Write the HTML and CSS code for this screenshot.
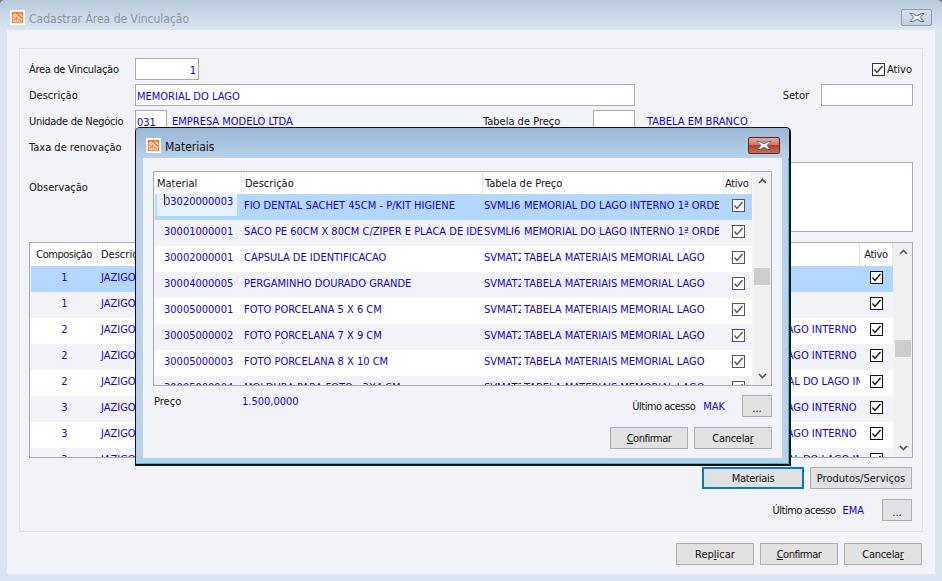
FILE: index.html
```html
<!DOCTYPE html>
<html lang="pt-BR">
<head>
<meta charset="utf-8">
<title>Cadastrar Área de Vinculação</title>
<link rel="stylesheet" href="styles.css">
</head>
<body>
<svg class="defs" width="0" height="0" aria-hidden="true">
  <symbol id="logo" viewBox="0 0 16 16">
    <rect width="16" height="16" fill="#fff"/>
    <rect x="2" y="2" width="12" height="12" fill="#f47a2c"/>
    <path d="M3 7l3-3M3 10l5-5M10 4l3 3M8 7l5 4M4 13v-2M6 13v-3M8 13V9M10 13v-2M12 13v-1" stroke="#fff" stroke-width="1.2" fill="none"/>
  </symbol>
  <symbol id="x" viewBox="0 0 18 11">
    <path d="M4.5 1.5L9 4l4.500-2.500h2.500L12 5.500l4 4h-3L9 7.200 5 9.500H2l4-4-4-4z" fill="#fff" stroke="#5b6570" stroke-width="1"/>
  </symbol>
  <symbol id="chk" viewBox="0 0 13 13">
    <rect x=".5" y=".5" width="12" height="12" fill="#fff" stroke="currentColor"/>
    <path d="M2.500 6.500L5 9.500 10.500 3" fill="none" stroke="currentColor" stroke-width="1.400"/>
  </symbol>
  <symbol id="up" viewBox="0 0 9 6"><path d="M1 5l3.500-3.500L8 5" fill="none" stroke="#555" stroke-width="1.600"/></symbol>
  <symbol id="down" viewBox="0 0 9 6"><path d="M1 1l3.500 3.500L8 1" fill="none" stroke="#555" stroke-width="1.600"/></symbol>
</svg>

<div class="win">
  <div class="titlebar">
    <svg class="logo"><use href="#logo"/></svg>
    <span class="title-text">Cadastrar Área de Vinculação</span>
    <span class="close"><svg class="close-x"><use href="#x"/></svg></span>
  </div>
  <div class="client">
    <div class="group">
      <div class="row">
        <span class="lbl tight">Área de Vinculação</span>
        <span class="input w64 num val">1</span>
        <span class="grow"></span>
        <svg class="chk chk-top"><use href="#chk"/></svg>
        <span class="ativo-lbl">Ativo</span>
      </div>
      <div class="row">
        <span class="lbl">Descrição</span>
        <span class="input w500 val">MEMORIAL DO LAGO</span>
        <span class="grow"></span>
        <span class="lbl-setor">Setor</span>
        <span class="input w92"></span>
      </div>
      <div class="row">
        <span class="lbl tight">Unidade de Negócio</span>
        <span class="input w32 val">031</span>
        <span class="val name-un">EMPRESA MODELO LTDA</span>
        <span class="lbl-tab">Tabela de Preço</span>
        <span class="input w42"></span>
        <span class="val name-tab">TABELA EM BRANCO</span>
      </div>
      <div class="row">
        <span class="lbl">Taxa de renovação</span>
      </div>
      <div class="row row-obs">
        <span class="lbl lbl-obs">Observação</span>
        <span class="input textarea"></span>
      </div>

      <div class="list main-list">
        <div class="list-body">
          <div class="head main-head">
            <span class="h m-comp center tighter">Composição</span>
            <span class="h m-desc">Descrição</span>
            <span class="h m-tab"></span>
            <span class="h m-ativ center tight">Ativo</span>
          </div>
          <div class="rows">
            <div class="r sel"><span class="c m-comp center">1</span><span class="c m-desc">JAZIGO</span><span class="c m-tab"></span><span class="c m-ativ"><svg class="chk"><use href="#chk"/></svg></span></div>
            <div class="r alt"><span class="c m-comp center">1</span><span class="c m-desc">JAZIGO</span><span class="c m-tab"></span><span class="c m-ativ"><svg class="chk"><use href="#chk"/></svg></span></div>
            <div class="r"><span class="c m-comp center">2</span><span class="c m-desc">JAZIGO</span><span class="c m-tab">MEMORIAL DO LAGO INTERNO</span><span class="c m-ativ"><svg class="chk"><use href="#chk"/></svg></span></div>
            <div class="r alt"><span class="c m-comp center">2</span><span class="c m-desc">JAZIGO</span><span class="c m-tab">MEMORIAL DO LAGO INTERNO</span><span class="c m-ativ"><svg class="chk"><use href="#chk"/></svg></span></div>
            <div class="r"><span class="c m-comp center">2</span><span class="c m-desc">JAZIGO</span><span class="c m-tab">TABELA MEMORIAL DO LAGO INTERNO</span><span class="c m-ativ"><svg class="chk"><use href="#chk"/></svg></span></div>
            <div class="r alt"><span class="c m-comp center">3</span><span class="c m-desc">JAZIGO</span><span class="c m-tab">MEMORIAL DO LAGO INTERNO</span><span class="c m-ativ"><svg class="chk"><use href="#chk"/></svg></span></div>
            <div class="r"><span class="c m-comp center">3</span><span class="c m-desc">JAZIGO</span><span class="c m-tab">MEMORIAL DO LAGO INTERNO</span><span class="c m-ativ"><svg class="chk"><use href="#chk"/></svg></span></div>
            <div class="r alt"><span class="c m-comp center">3</span><span class="c m-desc">JAZIGO</span><span class="c m-tab">TABELA MEMORIAL DO LAGO INTERNO</span><span class="c m-ativ"><svg class="chk"><use href="#chk"/></svg></span></div>
          </div>
        </div>
        <div class="sb">
          <svg class="arrow"><use href="#up"/></svg>
          <span class="thumb main-thumb"></span>
          <span class="grow"></span>
          <svg class="arrow"><use href="#down"/></svg>
        </div>
      </div>

      <div class="row row-tabs">
        <span class="btn btn-focus tight">Materiais</span>
        <span class="btn btn-prod">Produtos/Serviços</span>
      </div>
      <div class="row row-last">
        <span class="lbl-plain tighter">Último acesso</span>
        <span class="val user">EMA</span>
        <span class="btn btn-dots">...</span>
      </div>
    </div>
    <div class="footer">
      <span class="btn">Rep<u>l</u>icar</span>
      <span class="btn tighter"><u>C</u>onfirmar</span>
      <span class="btn tight">Cancela<u>r</u></span>
    </div>
  </div>

  <div class="dialog">
    <div class="titlebar dlg-title">
      <svg class="logo"><use href="#logo"/></svg>
      <span class="dlg-title-text">Materiais</span>
      <span class="close close-red"><svg class="close-x"><use href="#x"/></svg></span>
    </div>
    <div class="dlg-client">
      <div class="list dlg-list">
        <div class="list-body">
          <div class="head">
            <span class="h d-mat">Material</span>
            <span class="h d-desc">Descrição</span>
            <span class="h d-tab">Tabela de Preço</span>
            <span class="h d-ativ tight">Ativo</span>
          </div>
          <div class="rows">
            <div class="r sel"><span class="c d-mat focus"><span class="focus-box"><i class="caret"></i>03020000003</span></span><span class="c d-desc">FIO DENTAL SACHET 45CM - P/KIT HIGIENE</span><span class="c d-code">SVMLI6</span><span class="c d-name">MEMORIAL DO LAGO INTERNO 1ª ORDEM</span><span class="c d-ativ"><svg class="chk"><use href="#chk"/></svg></span></div>
            <div class="r alt"><span class="c d-mat">30001000001</span><span class="c d-desc">SACO PE 60CM X 80CM C/ZIPER E PLACA DE IDENTIFICACAO</span><span class="c d-code">SVMLI6</span><span class="c d-name">MEMORIAL DO LAGO INTERNO 1ª ORDEM</span><span class="c d-ativ"><svg class="chk"><use href="#chk"/></svg></span></div>
            <div class="r"><span class="c d-mat">30002000001</span><span class="c d-desc">CAPSULA DE IDENTIFICACAO</span><span class="c d-code">SVMAT2</span><span class="c d-name">TABELA MATERIAIS MEMORIAL LAGO</span><span class="c d-ativ"><svg class="chk"><use href="#chk"/></svg></span></div>
            <div class="r alt"><span class="c d-mat">30004000005</span><span class="c d-desc">PERGAMINHO DOURADO GRANDE</span><span class="c d-code">SVMAT2</span><span class="c d-name">TABELA MATERIAIS MEMORIAL LAGO</span><span class="c d-ativ"><svg class="chk"><use href="#chk"/></svg></span></div>
            <div class="r"><span class="c d-mat">30005000001</span><span class="c d-desc">FOTO PORCELANA 5 X 6 CM</span><span class="c d-code">SVMAT2</span><span class="c d-name">TABELA MATERIAIS MEMORIAL LAGO</span><span class="c d-ativ"><svg class="chk"><use href="#chk"/></svg></span></div>
            <div class="r alt"><span class="c d-mat">30005000002</span><span class="c d-desc">FOTO PORCELANA 7 X 9 CM</span><span class="c d-code">SVMAT2</span><span class="c d-name">TABELA MATERIAIS MEMORIAL LAGO</span><span class="c d-ativ"><svg class="chk"><use href="#chk"/></svg></span></div>
            <div class="r"><span class="c d-mat">30005000003</span><span class="c d-desc">FOTO PORCELANA 8 X 10 CM</span><span class="c d-code">SVMAT2</span><span class="c d-name">TABELA MATERIAIS MEMORIAL LAGO</span><span class="c d-ativ"><svg class="chk"><use href="#chk"/></svg></span></div>
            <div class="r alt"><span class="c d-mat">30005000004</span><span class="c d-desc">MOLDURA PARA FOTO - 3X4 CM</span><span class="c d-code">SVMAT2</span><span class="c d-name">TABELA MATERIAIS MEMORIAL LAGO</span><span class="c d-ativ"><svg class="chk"><use href="#chk"/></svg></span></div>
          </div>
        </div>
        <div class="sb">
          <svg class="arrow"><use href="#up"/></svg>
          <span class="thumb dlg-thumb"></span>
          <span class="grow"></span>
          <svg class="arrow"><use href="#down"/></svg>
        </div>
      </div>
      <div class="dlg-info">
        <span class="lbl-preco">Preço</span>
        <span class="val preco">1.500,0000</span>
        <span class="grow"></span>
        <span class="lbl-plain lbl-mak tighter">Último acesso</span>
        <span class="val user user-mak">MAK</span>
        <span class="btn btn-dots">...</span>
      </div>
      <div class="dlg-actions">
        <span class="btn tighter"><u>C</u>onfirmar</span>
        <span class="btn tight">Cancela<u>r</u></span>
      </div>
    </div>
  </div>
</div>
</body>
</html>
```
FILE: styles.css
```css
* { box-sizing: border-box; }
html, body { margin: 0; padding: 0; }
body {
  width: 942px;
  height: 581px;
  overflow: hidden;
  background: #6d7780;
  font-family: "DejaVu Sans", Tahoma, sans-serif;
  font-stretch: condensed;
  font-size: 11px;
  line-height: 14px;
  color: #111;
}
.defs { position: absolute; }
.tight { letter-spacing: -.3px; }
.tighter { letter-spacing: -.5px; }
.win {
  position: relative;
  width: 942px;
  height: 581px;
  display: flex;
  flex-direction: column;
  border-radius: 5px 5px 0 0;
  background: #dae6f2;
  overflow: hidden;
}
.titlebar {
  height: 30px;
  flex: none;
  display: flex;
  align-items: center;
  padding: 0 10px 0 10px;
  background: linear-gradient(#b7c9da, #dae6f2);
}
.logo { width: 15px; height: 15px; flex: none; margin-top: 4px; }
.title-text {
  margin-left: 4px;
  margin-top: 8px;
  font-size: 12px;
  color: #8c939a;
  flex: 1;
}
.close {
  width: 31px;
  height: 17px;
  margin-top: 5px;
  border: 1px solid #8c9cb0;
  border-radius: 2px;
  background: linear-gradient(#d6e0ea, #c4d2e0);
  display: flex;
  align-items: center;
  justify-content: center;
}
.close-x { width: 18px; height: 11px; }

.client {
  flex: 1;
  margin: 0 7px 7px;
  padding: 18px 12px 0;
  background: #f1f3f9;
  display: flex;
  flex-direction: column;
}
.group {
  height: 484px;
  padding: 9px 9px 0 9px;
  border: 1px solid #dfe0e4;
  display: flex;
  flex-direction: column;
}
.row {
  height: 22px;
  margin-bottom: 4px;
  display: flex;
  align-items: center;
  flex: none;
}
.lbl { width: 106px; flex: none; padding-top: 2px; }
.grow { flex: 1; }
.input {
  height: 22px;
  flex: none;
  background: #fff;
  border: 1px solid #a9abb2;
  padding: 5px 1px 0;
  white-space: nowrap;
  overflow: hidden;
}
.w64 { width: 64px; }
.w500 { width: 500px; }
.w92 { width: 92px; }
.w32 { width: 32px; }
.w42 { width: 42px; }
.num { text-align: right; padding-right: 2px; }
.val { color: #1400c6; }
.lbl-setor { margin-right: 12px; padding-top: 2px; }
.ativo-lbl { margin: 0 1px 0 2px; padding-top: 2px; }
.chk { width: 13px; height: 13px; color: #111; flex: none; }
.chk-top { color: #333; }
.name-un { margin-left: 5px; width: 311px; flex: none; padding-top: 2px; }
.lbl-tab { width: 110px; flex: none; padding-top: 2px; }
.name-tab { margin-left: 12px; padding-top: 2px; }
.row-obs { height: 70px; align-items: flex-start; margin-bottom: 10px; }
.lbl-obs { margin-top: 17px; }
.textarea { flex: 1; height: 70px; }

.list {
  display: flex;
  border: 1px solid #a9abb2;
  background: #f1f3f9;
  overflow: hidden;
  flex: none;
}
.main-list { height: 216px; padding-left: 1px; }
.list-body { flex: 1; min-width: 0; display: flex; flex-direction: column; }
.head {
  height: 22px;
  flex: none;
  display: flex;
  background: #fff;
}
.main-head { height: 23px; }
.h {
  border-right: 1px solid #e4e5e8;
  padding: 5px 0 0 3px;
  white-space: nowrap;
  overflow: hidden;
  flex: none;
}
.rows { flex: 1; overflow: hidden; }
.r { height: 26px; display: flex; background: #fff; color: #1400c6; }
.alt { background: #f1f3f9; }
.sel { background: #b3d7ff; }
.c {
  flex: none;
  padding: 5px 0 0 3px;
  white-space: nowrap;
  overflow: hidden;
}
.center { text-align: center; padding-left: 0; }
.sb {
  width: 18px;
  flex: none;
  margin-left: 1px;
  background: #f0f0f0;
  display: flex;
  flex-direction: column;
  align-items: center;
}
.arrow { width: 9px; height: 6px; margin: 6px 0; flex: none; }
.thumb { width: 16px; height: 17px; background: #cdcdcd; flex: none; }

.m-comp { width: 67px; }
.m-desc { width: 402px; }
.m-tab { width: 360px; padding-left: 206px; }
.h.m-tab { padding-left: 0; }
.m-ativ { width: 33px; border-right: 0; text-align: center; padding-left: 0; }
.h.m-ativ { border-right: 1px solid #e4e5e8; }
.main-thumb { margin-top: 79px; }

.row-tabs { margin: 9px 0 10px; justify-content: flex-end; padding-right: 1px; }
.btn {
  width: 78px;
  height: 22px;
  flex: none;
  background: #e1e1e1;
  border: 1px solid #adadad;
  text-align: center;
  padding-top: 4px;
  color: #111;
}
.btn u { text-decoration: underline; }
.btn-focus { width: 102px; border: 2px solid #0078d7; padding-top: 3px; }
.btn-prod { width: 102px; margin-left: 6px; }
.btn-dots { width: 30px; padding-top: 6px; }
.row-last { justify-content: flex-end; padding-right: 1px; }
.lbl-plain { padding-top: 2px; }
.user { margin: 0 18px 0 7px; padding-top: 2px; }

.footer {
  display: flex;
  justify-content: flex-end;
  gap: 6px;
  margin-top: 11px;
  margin-right: 1px;
}

.dialog {
  position: absolute;
  left: 135px;
  top: 127px;
  width: 656px;
  height: 339px;
  display: flex;
  flex-direction: column;
  border: 1px solid #111;
  border-bottom-width: 2px;
  border-right-width: 2px;
  border-radius: 5px 5px 0 0;
  background: #b9d1ea;
  box-shadow: inset -1px -1px 0 #39c4d4;
  overflow: hidden;
}
.dlg-title {
  background: linear-gradient(#9ab6d3, #b9d1ea);
  padding: 0 9px 0 10px;
}
.dlg-title-text { margin-left: 4px; margin-top: 8px; font-size: 12px; color: #111; flex: 1; }
.close-red {
  width: 32px;
  border-color: #5f2a2a;
  background: linear-gradient(#e0a79e 0%, #cf7a6a 45%, #b5402b 50%, #c76d5c 100%);
}
.dlg-client {
  margin: 0 7px;
  padding: 13px 10px 0;
  height: 300px;
  background: #f1f3f9;
  display: flex;
  flex-direction: column;
}
.dlg-list { height: 215px; flex: none; padding-left: 1px; }
.d-mat { width: 87px; padding-left: 2px; }
.r .d-mat { padding-left: 9px; }
.d-desc { width: 241px; padding-left: 2px; }
.h.d-desc { padding-left: 3px; }
.h.d-tab { width: 241px; padding-left: 2px; }
.d-code { width: 38px; padding-left: 1px; }
.d-name { width: 195px; margin-left: 3px; padding-left: 0; }
.d-ativ { width: 35px; text-align: center; padding-left: 4px; }
.d-ativ .chk { color: #555; }
.h.d-ativ { width: 28px; padding-left: 1px; text-align: left; }
.r .focus { padding: 0 0 0 2px; position: relative; }
.focus-box {
  display: block;
  width: 80px;
  height: 22px;
  padding: 1px 0 0 7px;
  background: #e6f2ff;
  position: relative;
}
.caret {
  position: absolute;
  left: 7px;
  top: 0;
  width: 1px;
  height: 11px;
  background: #222;
  box-shadow: 1px 2px 0 #a5e3a0;
}
.dlg-thumb { margin-top: 78px; }
.dlg-info {
  display: flex;
  height: 22px;
  margin-top: 9px;
  flex: none;
}
.lbl-preco { padding: 0 0 0 1px; width: 89px; }
.preco { padding-top: 0; }
.lbl-mak, .user-mak { padding-top: 5px; }
.user-mak { margin-left: 8px; margin-right: 17px; }
.dlg-actions {
  display: flex;
  justify-content: flex-end;
  gap: 6px;
  margin-top: 10px;
}
```
